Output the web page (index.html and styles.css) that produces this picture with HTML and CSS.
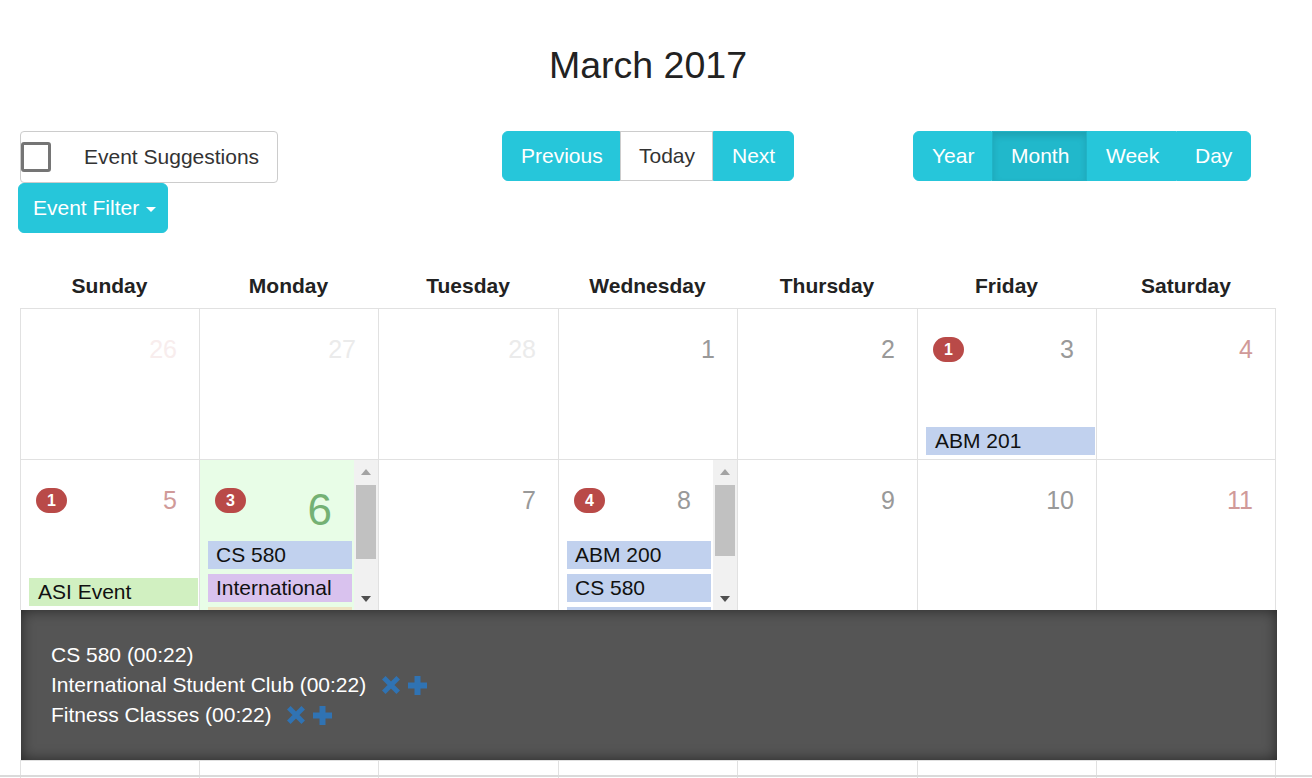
FILE: index.html
```html
<!DOCTYPE html>
<html>
<head>
<meta charset="utf-8">
<title>March 2017</title>
<link rel="stylesheet" href="styles.css">
</head>
<body>
<div class="wrap">
  <h3 class="title">March 2017</h3>

  <div class="toolbar">
    <div class="left">
      <label class="suggest"><span class="check"></span><span class="suggest-text">Event Suggestions</span></label>
      <button class="btn btn-cyan filter">Event Filter <span class="caret"></span></button>
    </div>
    <div class="group nav">
      <button class="btn btn-cyan">Previous</button><button class="btn btn-white">Today</button><button class="btn btn-cyan">Next</button>
    </div>
    <div class="group views">
      <button class="btn btn-cyan">Year</button><button class="btn btn-cyan active">Month</button><button class="btn btn-cyan">Week</button><button class="btn btn-cyan">Day</button>
    </div>
  </div>

  <div class="cal">
    <div class="cal-head">
      <div>Sunday</div><div>Monday</div><div>Tuesday</div><div>Wednesday</div><div>Thursday</div><div>Friday</div><div>Saturday</div>
    </div>

    <div class="cal-row">
      <div class="day"><div class="hd"><span class="num out weekend">26</span></div></div>
      <div class="day"><div class="hd"><span class="num out">27</span></div></div>
      <div class="day"><div class="hd"><span class="num out">28</span></div></div>
      <div class="day"><div class="hd"><span class="num">1</span></div></div>
      <div class="day"><div class="hd"><span class="num">2</span></div></div>
      <div class="day"><div class="hd"><span class="badge">1</span><span class="num">3</span></div><div class="ev ev-blue">ABM 201</div></div>
      <div class="day"><div class="hd"><span class="num weekend">4</span></div></div>
    </div>

    <div class="cal-row">
      <div class="day"><div class="hd"><span class="badge">1</span><span class="num weekend">5</span></div><div class="ev ev-green">ASI Event</div></div>
      <div class="day today scroll">
        <div class="sbody">
          <div class="hd"><span class="badge">3</span><span class="num big">6</span></div>
          <div class="elist">
            <div class="sev ev-blue">CS 580</div>
            <div class="sev ev-purple">International Student Club</div>
            <div class="sev ev-beige">Fitness Classes</div>
          </div>
        </div>
        <div class="sbar"><div class="sb-btn"><span class="up"></span></div><div class="thumb t1"></div><div class="sb-fill"></div><div class="sb-btn"><span class="down"></span></div></div>
      </div>
      <div class="day"><div class="hd"><span class="num">7</span></div></div>
      <div class="day scroll">
        <div class="sbody">
          <div class="hd"><span class="badge">4</span><span class="num">8</span></div>
          <div class="elist">
            <div class="sev ev-blue">ABM 200</div>
            <div class="sev ev-blue">CS 580</div>
            <div class="sev ev-blue">ABM 201</div>
            <div class="sev ev-blue">CS 480</div>
          </div>
        </div>
        <div class="sbar"><div class="sb-btn"><span class="up"></span></div><div class="thumb t2"></div><div class="sb-fill"></div><div class="sb-btn"><span class="down"></span></div></div>
      </div>
      <div class="day"><div class="hd"><span class="num">9</span></div></div>
      <div class="day"><div class="hd"><span class="num">10</span></div></div>
      <div class="day"><div class="hd"><span class="num weekend">11</span></div></div>
    </div>

    <div class="slide">
      <ul class="slide-list">
        <li>CS 580 (00:22)</li>
        <li>International Student Club (00:22)
          <span class="icons">
            <svg class="ic-x" width="18" height="18" viewBox="0 0 18 18"><path d="M1.8 1.8L16.2 16.2M16.2 1.8L1.8 16.2" stroke="currentColor" stroke-width="5"/></svg>
            <svg class="ic-plus" width="19" height="19" viewBox="0 0 19 19"><path d="M6.5 0h6v6.5H19v6h-6.5V19h-6v-6.5H0v-6h6.5z" fill="currentColor"/></svg>
          </span>
        </li>
        <li>Fitness Classes (00:22)
          <span class="icons">
            <svg class="ic-x" width="18" height="18" viewBox="0 0 18 18"><path d="M1.8 1.8L16.2 16.2M16.2 1.8L1.8 16.2" stroke="currentColor" stroke-width="5"/></svg>
            <svg class="ic-plus" width="19" height="19" viewBox="0 0 19 19"><path d="M6.5 0h6v6.5H19v6h-6.5V19h-6v-6.5H0v-6h6.5z" fill="currentColor"/></svg>
          </span>
        </li>
      </ul>
    </div>

    <div class="cal-row">
      <div class="day"><div class="hd"><span class="num weekend">12</span></div></div>
      <div class="day"><div class="hd"><span class="num">13</span></div></div>
      <div class="day"><div class="hd"><span class="num">14</span></div></div>
      <div class="day"><div class="hd"><span class="num">15</span></div></div>
      <div class="day"><div class="hd"><span class="num">16</span></div></div>
      <div class="day"><div class="hd"><span class="num">17</span></div></div>
      <div class="day"><div class="hd"><span class="num weekend">18</span></div></div>
    </div>
  </div>
</div>
<div class="winbar"></div>
</body>
</html>
```

FILE: styles.css
```css
* { box-sizing: border-box; }

html, body {
  margin: 0;
  padding: 0;
  background: #fff;
  overflow: hidden;
}

body {
  font-family: "Liberation Sans", Arial, Helvetica, sans-serif;
  font-size: 21px;
  line-height: 30px;
  color: #333;
}

.wrap {
  width: 1256px;
  margin-left: 20px;
}

.title {
  margin: 45px 0 0;
  font-size: 37.5px;
  line-height: 40px;
  font-weight: normal;
  text-align: center;
  color: #222;
}

.toolbar {
  margin-top: 46px;
  display: grid;
  grid-template-columns: 1fr auto 1fr;
  align-items: start;
}

.left {
  display: flex;
  flex-direction: column;
  align-items: flex-start;
}

.suggest {
  display: flex;
  align-items: center;
  width: 258px;
  height: 52px;
  border: 1px solid #ccc;
  border-radius: 4px;
  white-space: nowrap;
}

.check {
  width: 30px;
  height: 30px;
  border: 3px solid #757575;
  border-radius: 3px;
  background: #fff;
  flex: none;
}

.suggest-text {
  margin-left: 33px;
  color: #333;
  white-space: nowrap;
}

.btn {
  font-family: inherit;
  font-size: 21px;
  line-height: 30px;
  height: 50px;
  padding: 9px 18px;
  border: 1px solid transparent;
  margin: 0;
  cursor: pointer;
  white-space: nowrap;
}

.btn-cyan {
  background: #26c6da;
  border-color: #26c6da;
  color: #fff;
}

.btn-cyan.active {
  background: #21b8cb;
  border-color: #20b3c6;
  box-shadow: inset 0 4px 7px rgba(0, 0, 0, 0.12);
}

.btn-white {
  background: #fff;
  border-color: #ccc;
  color: #333;
}

.filter {
  margin-left: -2px;
  width: 150px;
  padding: 9px 14px;
  border-radius: 6px;
  text-align: left;
}

.caret {
  display: inline-block;
  width: 0;
  height: 0;
  margin-left: 1px;
  vertical-align: middle;
  border-top: 5px solid #fff;
  border-left: 5px solid transparent;
  border-right: 5px solid transparent;
}

.group {
  display: flex;
}

.group .btn {
  border-radius: 0;
}

.group .btn:first-child {
  border-radius: 6px 0 0 6px;
}

.group .btn:last-child {
  border-radius: 0 6px 6px 0;
}

.views {
  justify-self: end;
  margin-right: 25px;
}

.views .btn:nth-child(1) { width: 79px; }
.views .btn:nth-child(2) { width: 95px; }
.views .btn:nth-child(3) { width: 89px; }
.views .btn:nth-child(4) { width: 75px; }

.nav .btn:nth-child(1) { width: 118px; }
.nav .btn:nth-child(2) { width: 93px; }
.nav .btn:nth-child(3) { width: 81px; }

.cal-head,
.cal-row {
  display: grid;
  grid-template-columns: 179px 179px 180px 179px 180px 179px 180px;
}

.cal-head {
  margin-top: 38px;
  padding-bottom: 7px;
  font-weight: bold;
  color: #222;
  text-align: center;
}

.day {
  height: 151px;
  border-top: 1px solid #e1e1e1;
  border-left: 1px solid #e1e1e1;
  display: flex;
  flex-direction: column;
  min-width: 0;
}

.day:last-child {
  border-right: 1px solid #e1e1e1;
}

.hd {
  display: flex;
  align-items: center;
  height: 25px;
  margin-top: 28px;
  padding: 0 22px 0 15px;
  flex: none;
}

.num {
  margin-left: auto;
  font-size: 25px;
  line-height: 25px;
  color: #999;
}

.num.weekend { color: #d09a99; }
.num.out { color: #ebebeb; }
.num.out.weekend { color: #f8eded; }

.num.big {
  align-self: flex-start;
  font-size: 44px;
  line-height: 44px;
  height: 25px;
  color: #74b174;
}

.badge {
  display: inline-block;
  height: 25px;
  min-width: 31px;
  padding: 0 10px;
  border-radius: 13px;
  background: #b94a48;
  color: #fff;
  font-size: 16px;
  font-weight: bold;
  line-height: 25px;
  text-align: center;
}

.ev {
  margin: auto 1px 4px 8px;
  height: 28px;
  line-height: 28px;
  padding-left: 9px;
  color: #111;
  white-space: nowrap;
  overflow: hidden;
}

.ev-blue { background: #c1d1ee; }
.ev-green { background: #d1f0c1; }
.ev-purple { background: #d9c2ee; }
.ev-beige { background: #eee4c4; }

.today { background: #e8fde7; }

.day.scroll {
  flex-direction: row;
}

.sbody {
  flex: 1;
  min-width: 0;
  overflow: hidden;
  display: flex;
  flex-direction: column;
}

.elist {
  margin: 28px 2px 0 8px;
}

.sev {
  height: 28px;
  line-height: 28px;
  padding-left: 8px;
  margin-bottom: 5px;
  color: #111;
  overflow: hidden;
}

.sbar {
  width: 24px;
  flex: none;
  background: #f1f1f1;
  display: flex;
  flex-direction: column;
}

.sb-btn {
  height: 24px;
  display: flex;
  align-items: center;
  justify-content: center;
  flex: none;
}

.up {
  width: 0;
  height: 0;
  border-left: 5.5px solid transparent;
  border-right: 5.5px solid transparent;
  border-bottom: 6px solid #a3a3a3;
}

.down {
  width: 0;
  height: 0;
  margin-top: 2px;
  border-left: 5.5px solid transparent;
  border-right: 5.5px solid transparent;
  border-top: 6px solid #505050;
}

.thumb {
  margin: 1px 2px 0;
  background: #c1c1c1;
  flex: none;
}

.t1 { height: 74px; }
.t2 { height: 71px; }

.sb-fill { flex: 1; }

.slide {
  margin-left: 1px;
  width: 1256px;
  height: 150px;
  background: #555;
  box-shadow: inset 0 0 14px rgba(0, 0, 0, 0.55);
  color: #fff;
}

.slide-list {
  list-style: none;
  margin: 0;
  padding: 30px;
}

.icons {
  display: inline-flex;
  align-items: center;
  gap: 8px;
  margin-left: 10px;
  vertical-align: -2px;
  color: #3073b3;
}

.winbar {
  position: fixed;
  left: 0;
  right: 0;
  bottom: 1px;
  height: 2px;
  background: #dadada;
}
```
